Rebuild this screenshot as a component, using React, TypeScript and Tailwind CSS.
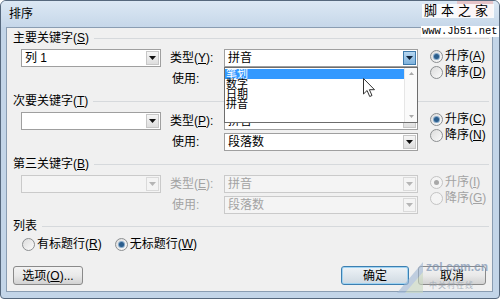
import React from 'react';

const Tri = ({ color = '#000' }: { color?: string }) => (
  <svg width="7" height="4" viewBox="0 0 7 4">
    <path d="M0 0h7L3.5 4z" fill={color} />
  </svg>
);

function Combo({ text, className, disabled, active }: { text: string; className: string; disabled?: boolean; active?: boolean }) {
  return (
    <div
      className={`flex h-[18px] border ${className} ${
        disabled ? 'border-[#cacaca] bg-[#f4f4f4] text-[#a3a3a3]' : 'border-[#9f9f9f] bg-white text-black'
      }`}
    >
      <div className="flex-1 pl-[3px] leading-[16px] whitespace-nowrap overflow-hidden">{text}</div>
      <div
        className={`m-px flex w-[13px] items-center justify-center border ${
          active
            ? 'border-[#3d79ab] bg-linear-to-b from-[#b6d6f0] to-[#7fb2dc]'
            : disabled
            ? 'border-[#dadada] bg-[#f4f4f4]'
            : 'border-[#c7c7c7] bg-linear-to-b from-[#f6f6f6] to-[#dedede]'
        }`}
      >
        <Tri color={disabled ? '#b5b5b5' : active ? '#10233a' : '#111'} />
      </div>
    </div>
  );
}

function Radio({ label, checked, disabled }: { label: React.ReactNode; checked?: boolean; disabled?: boolean }) {
  return (
    <div className={`flex h-[16px] items-center gap-[2px] ${disabled ? 'text-[#a3a3a3]' : 'text-black'}`}>
      <div
        className={`flex h-[13px] w-[13px] items-center justify-center rounded-full border ${
          disabled ? 'border-[#c4c4c4] bg-[#f4f4f4]' : 'border-[#8c8f91] bg-linear-to-br from-[#dcdcdc] to-[#fbfbfb]'
        }`}
      >
        {checked && (
          <div
            className={`h-[5px] w-[5px] rounded-full ${
              disabled ? 'bg-[#a8a8a8]' : 'bg-[#2a5d8c] shadow-[0_0_0_1px_#86a9c9]'
            }`}
          />
        )}
      </div>
      <span className="leading-[16px] whitespace-nowrap">{label}</span>
    </div>
  );
}

function Header({ children }: { children: React.ReactNode }) {
  return (
    <div className="flex h-[14px] items-center">
      <span className="leading-[14px] whitespace-nowrap">{children}</span>
      <div className="ml-[5px] h-px flex-1 bg-[#d6d9dc]" />
    </div>
  );
}

function Section({
  header,
  keyText,
  keyDisabled,
  typeLabel,
  typeText,
  useText,
  disabled,
  activeType,
  asc,
  desc,
  last,
}: {
  header: React.ReactNode;
  keyText: string;
  keyDisabled?: boolean;
  typeLabel: React.ReactNode;
  typeText: string;
  useText: string;
  disabled?: boolean;
  activeType?: boolean;
  asc: React.ReactNode;
  desc: React.ReactNode;
  last?: boolean;
}) {
  return (
    <div className={last ? 'mb-[5px]' : 'mb-[6px]'}>
      <Header>{header}</Header>
      <div className="mt-[4px] flex items-start">
        <Combo text={keyText} className="ml-[8px] w-[140px]" disabled={keyDisabled} />
        <div className="ml-[9px] flex flex-col gap-[3px]">
          <div className="flex">
            <div className={`w-[54px] leading-[18px] whitespace-nowrap ${disabled ? 'text-[#a3a3a3]' : ''}`}>{typeLabel}</div>
            <Combo text={typeText} className="w-[194px]" disabled={disabled} active={activeType} />
          </div>
          <div className="flex">
            <div className={`w-[54px] pl-[2px] leading-[18px] ${disabled ? 'text-[#a3a3a3]' : ''}`}>使用:</div>
            <Combo text={useText} className="w-[194px]" disabled={disabled} />
          </div>
        </div>
        <div className="-mt-[1px] ml-[12px] flex flex-col">
          <Radio label={asc} checked disabled={disabled} />
          <Radio label={desc} disabled={disabled} />
        </div>
      </div>
    </div>
  );
}

function Button({ children, className, primary }: { children: React.ReactNode; className: string; primary?: boolean }) {
  return (
    <div
      className={`flex h-[19px] items-center justify-center rounded-[3px] border ${className} ${
        primary
          ? 'border-[#3c7fb1] bg-linear-to-b from-[#eef3f7] to-[#cfd9e2] shadow-[inset_0_0_0_1px_#9fd3f2]'
          : 'border-[#8a8a8a] bg-linear-to-b from-[#f3f3f3] via-[#e9e9e9] to-[#d2d2d2]'
      }`}
    >
      <span className="leading-[16px] whitespace-nowrap">{children}</span>
    </div>
  );
}

export default function App() {
  return (
    <div className="relative flex h-[299px] w-[500px] flex-col overflow-hidden rounded-t-[6px] rounded-b-[4px] border border-[#56687d] bg-[#c3d5e8] font-['Liberation_Sans','Noto_Sans_CJK_SC',sans-serif] text-[12px] text-black">
      {/* title bar */}
      <div className="flex h-[26px] items-center bg-linear-to-b from-[#dce8f4] to-[#c6d7e9] pl-[8px]">
        <span className="leading-[14px]">排序</span>
      </div>
      <div className="flex flex-1 px-[5px] pr-[6px] pb-[6px]">
        <div className="flex flex-1 flex-col border border-[#8a9db2] bg-[#f0f0f0] pt-[3px] pr-[3px] pl-[6px]">
          <Section
            header={<>主要关键字(<u>S</u>)</>}
            keyText="列 1"
            typeLabel={<>类型(<u>Y</u>):</>}
            typeText="拼音"
            useText="段落数"
            activeType
            asc={<>升序(<u>A</u>)</>}
            desc={<>降序(<u>D</u>)</>}
          />
          <Section
            header={<>次要关键字(<u>T</u>)</>}
            keyText=""
            typeLabel={<>类型(<u>P</u>):</>}
            typeText="拼音"
            useText="段落数"
            asc={<>升序(<u>C</u>)</>}
            desc={<>降序(<u>N</u>)</>}
          />
          <Section
            header={<>第三关键字(<u>B</u>)</>}
            keyText=""
            keyDisabled
            disabled
            typeLabel={<>类型(<u>E</u>):</>}
            typeText="拼音"
            useText="段落数"
            asc={<>升序(<u>I</u>)</>}
            desc={<>降序(<u>G</u>)</>}
            last
          />
          <Header>列表</Header>
          <div className="mt-[3px] ml-[9px] flex gap-[13px]">
            <Radio label={<>有标题行(<u>R</u>)</>} />
            <Radio label={<>无标题行(<u>W</u>)</>} checked />
          </div>
          <div className="mt-[14px] flex items-start justify-between">
            <Button className="w-[70px]">
              选项(<u>O</u>)...
            </Button>
            <div className="mr-[3px] flex gap-[9px]">
              <Button className="w-[68px]" primary>
                确定
              </Button>
              <Button className="w-[68px]">取消</Button>
            </div>
          </div>
        </div>
      </div>

      {/* open dropdown list */}
      <div className="absolute top-[66px] left-[223px] flex h-[56px] w-[194px] border border-[#6d6d6d] bg-white">
        <div className="flex flex-1 flex-col pt-px text-[11px]">
          <div className="h-[10px] bg-[#3399ff] pl-[1px] leading-[10px] text-white">笔划</div>
          <div className="h-[10px] pl-[1px] leading-[10px]">数字</div>
          <div className="h-[10px] pl-[1px] leading-[10px]">日期</div>
          <div className="h-[10px] pl-[1px] leading-[10px]">拼音</div>
        </div>
        <div className="flex w-[13px] flex-col items-center justify-between border-l border-[#e6e6e6] bg-[#fafafa] py-[4px]">
          <svg width="5" height="3" viewBox="0 0 5 3">
            <path d="M0 3h5L2.5 0z" fill="#a9a9a9" />
          </svg>
          <svg width="5" height="3" viewBox="0 0 5 3">
            <path d="M0 0h5L2.5 3z" fill="#a9a9a9" />
          </svg>
        </div>
      </div>

      {/* mouse cursor */}
      <svg className="absolute top-[77px] left-[362px]" width="13" height="20" viewBox="0 0 13 20">
        <path d="M0.5 0.5v15.5l3.6-3.5 2.6 6 2.3-1-2.6-5.8h5.1z" fill="#fff" stroke="#333" strokeWidth="1" />
      </svg>

      {/* jb51 watermark */}
      <div className="absolute top-0 left-[456px] h-[16px] w-[36px] rounded-b-[3px] bg-[#e8b5b5] opacity-70" />
      <div className="absolute top-[3px] left-[421px] bg-white/85 px-[2px] font-['Liberation_Serif','Noto_Sans_CJK_SC',serif] text-[13px] leading-[14px] tracking-[4px]">
        脚本之家
      </div>
      <div className="absolute top-[25px] left-[420px] bg-white px-[1px] font-['Liberation_Mono',monospace] text-[10.5px] leading-[11px]">
        www.Jb51.net
      </div>

      {/* zol watermark */}
      <svg className="absolute top-[259px] left-[394px] opacity-60" width="30" height="34" viewBox="0 0 30 34">
        <path d="M2 33L28 2v31z" fill="#9fb7d4" />
        <path d="M10 33L28 12v21z" fill="#c9d8c0" />
      </svg>
      <div className="absolute top-[260px] left-[425px] text-[12px] leading-[13px] font-bold text-[#7d93b3] opacity-70">
        zol.com.cn
      </div>
      <div className="absolute top-[280px] left-[428px] text-[8px] leading-[9px] tracking-[1px] text-[#9aa6b4] opacity-80">
        中关村在线
      </div>
    </div>
  );
}
